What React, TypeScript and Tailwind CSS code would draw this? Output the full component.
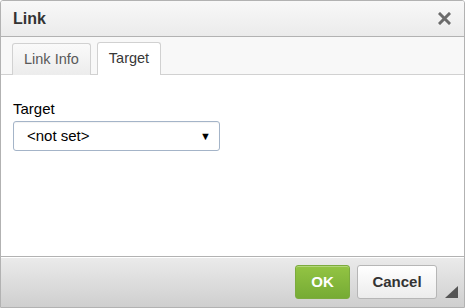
import React from 'react'

const App = () => {
  return (
    <div className="w-[465px] h-[308px] bg-white font-['Liberation_Sans',Arial,sans-serif]">
      <div className="w-full h-full flex flex-col border border-[#b2b2b2] rounded-t-[3px] overflow-hidden">
        {/* Title */}
        <div className="h-[36px] shrink-0 flex items-center justify-between pl-[12px] pr-[12px] bg-gradient-to-b from-[#f8f8f8] to-[#ebebeb] border-b border-[#b2b2b2]">
          <span className="text-[16px] font-bold text-[#333]">Link</span>
          <svg width="13" height="13" viewBox="0 0 13 13" className="mr-[1px]">
            <path d="M2 2 L11 11 M11 2 L2 11" stroke="#6b6b6b" strokeWidth="3" strokeLinecap="square" />
          </svg>
        </div>

        {/* Tabs */}
        <div className="h-[38px] shrink-0 flex items-end gap-[6px] px-[11px] bg-[#f8f8f8] border-b border-[#d1d1d1]">
          <div className="h-[32px] px-[11px] flex items-center text-[14.5px] text-[#595959] bg-gradient-to-b from-[#fafafa] to-[#ececec] border border-[#d1d1d1] border-b-0 rounded-t-[3px] -mb-px">
            Link Info
          </div>
          <div className="h-[33px] px-[11px] flex items-center text-[14.5px] text-[#383838] bg-white border border-[#d1d1d1] border-b-0 rounded-t-[3px] -mb-px">
            Target
          </div>
        </div>

        {/* Body */}
        <div className="flex-1 bg-white pl-[12px] pt-[26px]">
          <div className="text-[15px] text-[#000] leading-[16px]">Target</div>
          <div className="mt-[4px] w-[207px] h-[30px] flex items-center justify-between pl-[13px] pr-[8px] border border-[#a4b4c8] rounded-[3px] shadow-[inset_0_1px_1px_rgba(0,0,0,0.05)]">
            <span className="text-[15px] text-[#000]">&lt;not set&gt;</span>
            <span className="text-[11px] text-[#000]">▼</span>
          </div>
        </div>

        {/* Footer */}
        <div className="h-[51px] shrink-0 relative flex items-center justify-end gap-[7px] pr-[27px] bg-gradient-to-b from-[#ebebeb] to-[#cfcfcf] border-t border-[#b2b2b2] shadow-[inset_0_1px_0_#fff]">
          <button className="w-[55px] h-[34px] rounded-[3px] border border-[#7cab3e] bg-gradient-to-b from-[#93c443] to-[#76ab35] text-white text-[15px] font-bold shadow-[inset_0_1px_0_rgba(255,255,255,0.3)]">
            OK
          </button>
          <button className="w-[80px] h-[34px] rounded-[3px] border border-[#b6b6b6] bg-gradient-to-b from-[#ffffff] to-[#ececec] text-[#333] text-[15px] font-bold">
            Cancel
          </button>
          <svg width="13" height="12" viewBox="0 0 13 12" className="absolute right-[6px] bottom-[9px]">
            <path d="M13 0 L13 12 L0 12 Z" fill="#555" />
          </svg>
        </div>
      </div>
    </div>
  )
}

export default App
